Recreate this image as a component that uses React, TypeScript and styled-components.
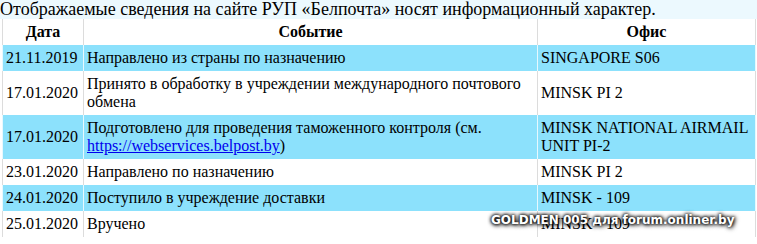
import type { ReactNode } from 'react';
import styled, { createGlobalStyle } from 'styled-components';

const GlobalStyle = createGlobalStyle`
  body {
    margin: 0;
    background: #ffffff;
    font-family: "Liberation Serif", "Times New Roman", serif;
    color: #000000;
  }
`;

const Page = styled.div`
  position: relative;
  width: 757px;
  height: 244px;
  overflow: hidden;
`;

const Notice = styled.div`
  height: 19px;
  background: #ecf9fe;
  font-size: 18px;
  line-height: 18px;
  white-space: nowrap;
  overflow: hidden;
`;

const Table = styled.table`
  margin-left: 2px;
  width: 754px;
  border-collapse: collapse;
  table-layout: fixed;
  font-size: 16px;
  line-height: 18px;
`;

const HeadCell = styled.th`
  height: 18px;
  padding: 4px 3px;
  border-left: 1px solid #dcdcdc;
  border-right: 1px solid #dcdcdc;
  background: #ffffff;
  font-weight: bold;
  text-align: center;
`;

const TableRow = styled.tr<{ $highlight: boolean }>`
  background: ${(p) => (p.$highlight ? '#8ce1fc' : '#ffffff')};
`;

const Cell = styled.td<{ $highlight: boolean }>`
  padding: 4px 3px;
  border-left: 1px solid ${(p) => (p.$highlight ? '#e6f8fe' : '#dcdcdc')};
  border-right: 1px solid ${(p) => (p.$highlight ? '#e6f8fe' : '#dcdcdc')};
  vertical-align: middle;
  text-align: left;
`;

const Link = styled.a`
  color: #0000ee;
  text-decoration: underline;
`;

const Watermark = styled.div`
  position: absolute;
  left: 491px;
  top: 212px;
  font-family: "DejaVu Sans", Verdana, sans-serif;
  font-weight: bold;
  font-size: 12px;
  line-height: 16px;
  color: #ffffff;
  white-space: nowrap;
  text-shadow: 0 0 3px #000, 0 0 4px #000, 1px 1px 5px #000;
`;

type Row = {
  date: string;
  event: ReactNode;
  office: string;
  highlight: boolean;
};

const rows: Row[] = [
  {
    date: '21.11.2019',
    event: 'Направлено из страны по назначению',
    office: 'SINGAPORE S06',
    highlight: true,
  },
  {
    date: '17.01.2020',
    event: 'Принято в обработку в учреждении международного почтового обмена',
    office: 'MINSK PI 2',
    highlight: false,
  },
  {
    date: '17.01.2020',
    event: (
      <>
        Подготовлено для проведения таможенного контроля (см.{' '}
        <Link href="#">https://webservices.belpost.by</Link>)
      </>
    ),
    office: 'MINSK NATIONAL AIRMAIL UNIT PI-2',
    highlight: true,
  },
  {
    date: '23.01.2020',
    event: 'Направлено по назначению',
    office: 'MINSK PI 2',
    highlight: false,
  },
  {
    date: '24.01.2020',
    event: 'Поступило в учреждение доставки',
    office: 'MINSK - 109',
    highlight: true,
  },
  {
    date: '25.01.2020',
    event: 'Вручено',
    office: 'MINSK - 109',
    highlight: false,
  },
];

export default function App() {
  return (
    <>
      <GlobalStyle />
      <Page>
        <Notice>
          Отображаемые сведения на сайте РУП «Белпочта» носят информационный
          характер.
        </Notice>
        <Table>
          <colgroup>
            <col style={{ width: 81 }} />
            <col style={{ width: 454 }} />
            <col style={{ width: 218 }} />
          </colgroup>
          <thead>
            <tr>
              <HeadCell>Дата</HeadCell>
              <HeadCell>Событие</HeadCell>
              <HeadCell>Офис</HeadCell>
            </tr>
          </thead>
          <tbody>
            {rows.map((row, i) => (
              <TableRow key={i} $highlight={row.highlight}>
                <Cell $highlight={row.highlight}>{row.date}</Cell>
                <Cell $highlight={row.highlight}>{row.event}</Cell>
                <Cell $highlight={row.highlight}>{row.office}</Cell>
              </TableRow>
            ))}
          </tbody>
        </Table>
        <Watermark>GOLDMEN 005 для forum.onliner.by</Watermark>
      </Page>
    </>
  );
}
